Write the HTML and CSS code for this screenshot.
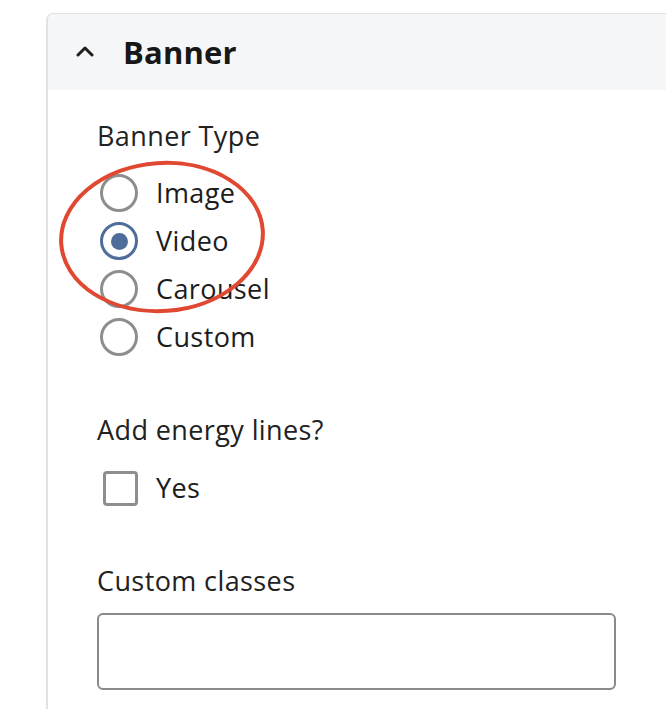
FILE: index.html
```html
<!DOCTYPE html>
<html>
<head>
<meta charset="utf-8">
<link rel="stylesheet" href="styles.css">
</head>
<body>
<div class="panel">
  <div class="panel-head">
    <svg class="chev" width="20" height="12" viewBox="0 0 20 12"><path d="M3 10 L10 3 L17 10" fill="none" stroke="#1f1f1f" stroke-width="3" stroke-linecap="round" stroke-linejoin="round"/></svg>
    <span class="title">Banner</span>
  </div>
  <div class="panel-body">
    <div class="field">
      <div class="label">Banner Type</div>
      <div class="options">
        <div class="opt"><span class="radio"></span><span>Image</span></div>
        <div class="opt"><span class="radio on"></span><span>Video</span></div>
        <div class="opt"><span class="radio"></span><span>Carousel</span></div>
        <div class="opt"><span class="radio"></span><span>Custom</span></div>
      </div>
      <svg class="mark" width="240" height="180" viewBox="0 0 240 180"><ellipse cx="120" cy="90" rx="101" ry="74" transform="rotate(-4 120 90)" fill="none" stroke="#e04832" stroke-width="4"/></svg>
    </div>
    <div class="field gap">
      <div class="label">Add energy lines?</div>
      <div class="opt"><span class="check"></span><span>Yes</span></div>
    </div>
    <div class="field gap">
      <div class="label">Custom classes</div>
      <div class="input"></div>
    </div>
  </div>
</div>
</body>
</html>
```
FILE: styles.css
```css
html, body {
  margin: 0;
  padding: 0;
  background: #fff;
}
body {
  font-family: "Open Sans", "Noto Sans", sans-serif;
  color: #222330;
  overflow: hidden;
  height: 710px;
}
.panel {
  margin: 13px 0 0 46px;
  width: 618px;
  border: 2px solid #dfe2e6;
  border-right: none;
  border-bottom: none;
  border-top-width: 1.5px;
  border-radius: 7px 0 0 0;
  height: 695px;
}
.panel-head {
  height: 76px;
  background: #f5f6f8;
  display: flex;
  align-items: center;
  border-radius: 6px 0 0 0;
}
.chev {
  margin-left: 27px;
  margin-right: 28px;
  margin-top: -2px;
}
.title {
  font-size: 31px;
  font-weight: 700;
  color: #171717;
  letter-spacing: 0.2px;
}
.panel-body {
  padding: 28px 0 0 49px;
}
.field {
  position: relative;
}
.field.gap {
  margin-top: 51px;
}
.label {
  font-size: 27px;
  line-height: 36px;
  letter-spacing: 0.4px;
  color: #222;
}
.options {
  margin-top: 15px;
}
.field.gap .opt {
  margin-top: 16px;
}
.opt {
  display: flex;
  align-items: center;
  height: 48px;
  font-size: 27px;
  line-height: 36px;
  letter-spacing: 0.4px;
  color: #1c1c1c;
}
.radio {
  box-sizing: border-box;
  width: 38px;
  height: 38px;
  border: 3px solid #8e8e8e;
  border-radius: 50%;
  margin-left: 3px;
  margin-right: 18px;
  display: flex;
  align-items: center;
  justify-content: center;
  background: #fff;
}
.radio.on {
  border-color: #4f6d9a;
}
.radio.on::after {
  content: "";
  width: 17px;
  height: 17px;
  border-radius: 50%;
  background: #4f6d9a;
}
.check {
  box-sizing: border-box;
  width: 35px;
  height: 35px;
  border: 3px solid #8e8e8e;
  border-radius: 4px;
  margin-left: 6px;
  margin-right: 18px;
}
.mark {
  position: absolute;
  left: -55px;
  top: 29px;
}
.input {
  box-sizing: border-box;
  margin-top: 14px;
  width: 519px;
  height: 77px;
  border: 2px solid #8a8a8a;
  border-radius: 6px;
}
```
